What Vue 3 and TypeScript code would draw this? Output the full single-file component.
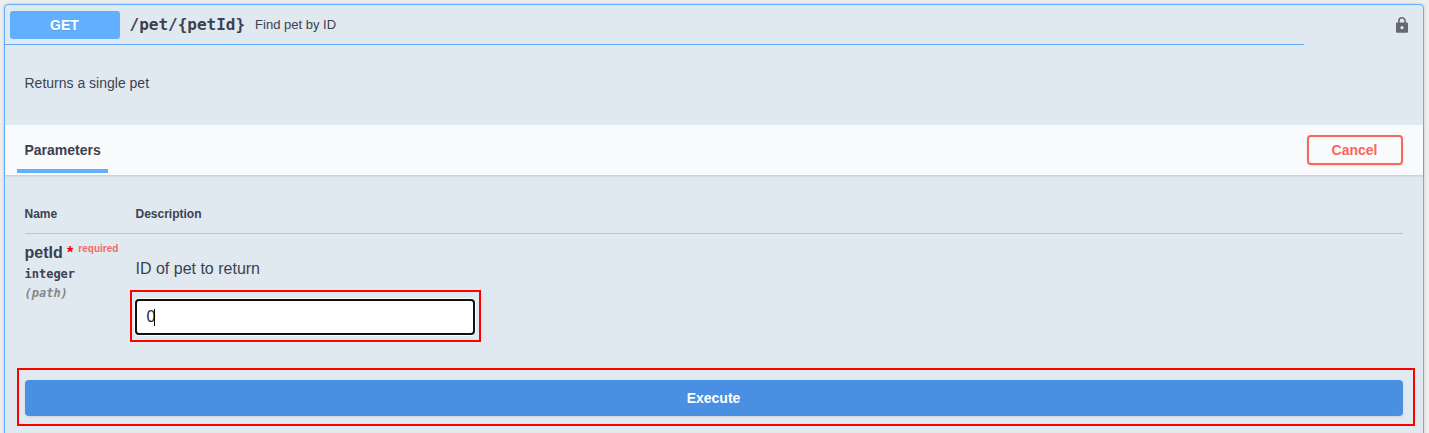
<script setup lang="ts">
import { ref } from 'vue'

const petId = ref('0')
</script>

<template>
  <main class="page">
    <section class="opblock">
      <header class="summary">
        <div class="summary-main">
          <span class="method">GET</span>
          <span class="path">/pet/{petId}</span>
          <span class="summary-text">Find pet by ID</span>
        </div>
        <svg class="lock" viewBox="0 0 16 16" width="16" height="16">
          <path class="shackle" d="M4.9 6V3.9a3.1 3.1 0 0 1 6.2 0V6" />
          <path fill-rule="evenodd" d="M3 5.5h10a1 1 0 0 1 1 1v8.3a1 1 0 0 1-1 1H3a1 1 0 0 1-1-1V6.500a1 1 0 0 1 1-1zM8 9.100a1.600 1.600 0 1 0 0 3.200a1.600 1.600 0 1 0 0-3.200z" />
        </svg>
      </header>
      <p class="note">Returns a single pet</p>
      <div class="section-head">
        <h4 class="tab">Parameters</h4>
        <button class="cancel" type="button">Cancel</button>
      </div>
      <div class="params">
        <div class="row head">
          <span>Name</span>
          <span>Description</span>
        </div>
        <div class="row">
          <div class="name-col">
            <div class="name">petId<span class="star">*</span><span class="required">required</span></div>
            <div class="type">integer</div>
            <div class="in">(path)</div>
          </div>
          <div class="desc-col">
            <p class="desc">ID of pet to return</p>
            <div class="field">
              <span class="value">{{ petId }}</span><span class="caret"></span>
              <span class="mark mark-field"></span>
            </div>
          </div>
        </div>
      </div>
      <div class="execute-wrap">
        <button class="execute" type="button">Execute</button>
        <span class="mark mark-execute"></span>
      </div>
    </section>
  </main>
</template>

<style>
body {
  background: #eeeeee;
}
</style>

<style scoped>
* {
  box-sizing: border-box;
}
.page {
  height: 433px;
  padding: 4px 5px 0 4px;
  overflow: hidden;
  background: #eeeeee;
  color: #3b4151;
  font-family: "Liberation Sans", Arial, sans-serif;
}
.opblock {
  height: 460px;
  border: 1px solid #61affe;
  border-radius: 4px;
  background: #e1e9f0;
  box-shadow: 0 0 3px rgba(0, 0, 0, 0.19);
}
.summary {
  display: flex;
  justify-content: space-between;
  height: 40px;
  padding-right: 13px;
}
.summary-main {
  display: flex;
  align-items: center;
  width: 1299px;
  padding-left: 5px;
  border-bottom: 1px solid #61affe;
}
.method {
  width: 110px;
  height: 28px;
  padding-right: 1px;
  border-radius: 3px;
  background: #61affe;
  color: #fff;
  font-size: 14px;
  font-weight: 700;
  line-height: 28px;
  text-align: center;
  text-shadow: 0 1px 0 rgba(0, 0, 0, 0.1);
}
.path {
  margin-left: 9.5px;
  font: 700 16px/20px "DejaVu Sans Mono", monospace;
}
.summary-text {
  margin-left: 10px;
  font-size: 13px;
}
.lock {
  width: 16px;
  height: 16px;
  margin-top: 12px;
  fill: #65696f;
}
.shackle {
  fill: none;
  stroke: #65696f;
  stroke-width: 1.6;
}
.note {
  height: 80px;
  margin: 0;
  padding: 30px 20px 0 19.5px;
  font-size: 14px;
  line-height: 16px;
}
.section-head {
  display: flex;
  align-items: center;
  justify-content: space-between;
  height: 50px;
  padding: 0 20px 0 12px;
  background: #f9fafc;
  box-shadow: 0 1px 2px rgba(0, 0, 0, 0.15);
}
.tab {
  width: 91px;
  height: 48px;
  margin: 0 0 2px;
  padding-left: 7.5px;
  border-bottom: 4px solid #61affe;
  font-size: 14px;
  line-height: 50px;
}
.cancel {
  width: 96px;
  height: 30px;
  padding: 0 1px 0 0;
  border: 2px solid #f9665d;
  border-radius: 4px;
  background: transparent;
  box-shadow: 0 1px 2px rgba(0, 0, 0, 0.1);
  color: #f9665d;
  font: 700 14px/26px "Liberation Sans", Arial, sans-serif;
}
.params {
  height: 200px;
  padding: 20px 20px 0 19.5px;
}
.row {
  display: grid;
  grid-template-columns: 111px 1fr;
}
.head {
  height: 39px;
  border-bottom: 1px solid #bac3ce;
  font-size: 12px;
  font-weight: 700;
  line-height: 38px;
}
.name-col {
  padding-top: 9px;
}
.name {
  display: flex;
  height: 20px;
  font-size: 16px;
  font-weight: 700;
  line-height: 20px;
}
.star {
  margin-left: 4.4px;
  color: #f00;
}
.required {
  margin-left: 5px;
  color: #f16968;
  font-size: 10px;
  line-height: 12px;
}
.type,
.in {
  font: 700 12px/20px "DejaVu Sans Mono", monospace;
}
.type {
  height: 21px;
  line-height: 22px;
}
.in {
  height: 20px;
  line-height: 18px;
  color: #858789;
  font-style: italic;
}
.desc {
  margin: 25px 0 0;
  height: 40px;
  font-size: 16px;
  line-height: 20px;
}
.field {
  position: relative;
  display: flex;
  align-items: center;
  width: 340px;
  height: 36px;
  margin-left: -0.5px;
  padding-left: 9.5px;
  border: 2px solid #101010;
  border-radius: 4px;
  background: #fff;
  box-shadow: 0 0 0 1px #fafcfd;
  font-size: 16px;
}
.value {
  color: #222733;
  line-height: 18px;
}
.caret {
  width: 1px;
  height: 17px;
  margin-left: -1.4px;
  background: #000;
}
.mark {
  position: absolute;
  border: 2px solid #f00;
  pointer-events: none;
}
.mark-field {
  inset: -11px -8px -9px -7px;
}
.execute-wrap {
  position: relative;
  margin: 5px 20px 0;
}
.execute {
  display: block;
  width: 100%;
  height: 36px;
  padding: 0 1px 0 0;
  border: 0;
  border-radius: 4px;
  background: #4990e2;
  box-shadow: 0 1px 2px rgba(0, 0, 0, 0.1);
  color: #fff;
  font: 700 14px/36px "Liberation Sans", Arial, sans-serif;
}
.mark-execute {
  inset: -12px -12px -10px -8px;
}
</style>
